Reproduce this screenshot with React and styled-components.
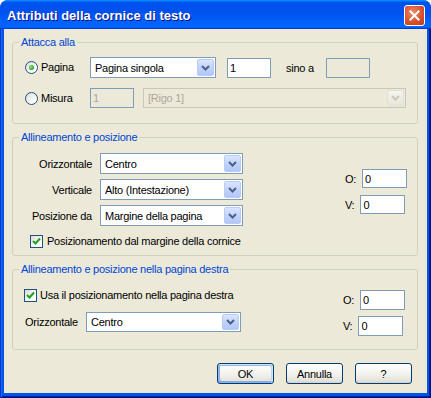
import React from 'react';
import styled, { createGlobalStyle } from 'styled-components';

const GlobalStyle = createGlobalStyle`
  html, body { margin: 0; padding: 0; background: #fff; }
  body {
    font-family: "Liberation Sans", Arial, sans-serif;
    font-size: 11px;
    letter-spacing: -0.25px;
    color: #000;
  }
`;

const Window = styled.div`
  width: 431px;
  height: 398px;
  display: flex;
  flex-direction: column;
  border-radius: 8px 8px 0 0;
  overflow: hidden;
  background: #0055e5;
`;

const TitleBar = styled.div`
  flex: none;
  height: 29px;
  display: flex;
  align-items: center;
  justify-content: space-between;
  padding: 0 6px 0 7px;
  background: linear-gradient(180deg, #0997ff, #0053ee 8%, #0050ee 40%, #06f 88%, #06f 93%, #005bff 95%, #003dd7 96%, #003dd7);
`;

const Title = styled.div`
  color: #fff;
  font-weight: bold;
  font-size: 13px;
  letter-spacing: 0;
  text-shadow: 1px 1px #0f1089;
  padding-top: 1px;
`;

const CloseButton = styled.div`
  width: 21px;
  height: 21px;
  margin-top: 2px;
  box-sizing: border-box;
  border: 1px solid #fff;
  border-radius: 3px;
  background: radial-gradient(circle at 40% 35%, #f08a6c, #d8532f 55%, #b83a14);
  display: flex;
  align-items: center;
  justify-content: center;
`;

const Frame = styled.div`
  flex: 1;
  display: flex;
  padding: 0 4px 5px 4px;
  box-shadow: inset 1px 0 #0831d9, inset -1px -1px #00138c, inset 2px 0 #166aee, inset -2px -2px #001ea0;
`;

const Body = styled.div`
  flex: 1;
  background: #ece9d8;
  padding: 7px 9px 0 8px;
  display: flex;
  flex-direction: column;
  gap: 7px;
`;

const Group = styled.fieldset`
  margin: 0;
  padding: 0;
  min-width: 0;
  border: 1px solid #d0d0bf;
  border-radius: 3px;
`;

const Legend = styled.legend`
  margin-left: 6px;
  padding: 0 2px;
  color: #0046d5;
  line-height: 13px;
`;

const GroupBody = styled.div`
  padding: ${p => p.$pad};
  display: ${p => (p.$flex ? 'flex' : 'block')};
`;

const Row = styled.div`
  display: flex;
  align-items: center;
  height: ${p => p.$h || 21}px;
  margin-top: ${p => p.$mt || 0}px;
  margin-left: ${p => p.$ml || 0}px;
`;

const Option = styled.label`
  display: flex;
  align-items: center;
  gap: 3px;
  width: ${p => (p.$w ? `${p.$w}px` : 'auto')};
  line-height: 13px;
`;

const RadioDot = styled.span`
  width: 13px;
  height: 13px;
  box-sizing: border-box;
  border: 1px solid #1c5180;
  border-radius: 50%;
  background: linear-gradient(135deg, #dcdcd7, #fff 80%);
  display: flex;
  align-items: center;
  justify-content: center;
  &::after {
    content: '';
    display: ${p => (p.$on ? 'block' : 'none')};
    width: 5px;
    height: 5px;
    border-radius: 50%;
    background: radial-gradient(circle at 40% 40%, #8ee58a, #21a121 70%);
  }
`;

const CheckBox = styled.span`
  width: 13px;
  height: 13px;
  box-sizing: border-box;
  border: 1px solid #1c5180;
  background: linear-gradient(135deg, #dcdcd7, #fff 80%);
  display: flex;
  align-items: center;
  justify-content: center;
`;

const Combo = styled.div`
  width: ${p => p.$w}px;
  height: ${p => p.$h || 21}px;
  box-sizing: border-box;
  margin-left: ${p => p.$ml || 0}px;
  border: 1px solid ${p => (p.$disabled ? '#c9c7ba' : '#7f9db9')};
  background: ${p => (p.$disabled ? '#ece9d8' : '#fff')};
  color: ${p => (p.$disabled ? '#aca899' : '#000')};
  display: flex;
  align-items: center;
  padding: 1px;
`;

const ComboText = styled.span`
  flex: 1;
  padding-left: 3px;
  white-space: nowrap;
`;

const ComboButton = styled.span`
  flex: none;
  width: 17px;
  align-self: stretch;
  box-sizing: border-box;
  border: 1px solid ${p => (p.$disabled ? '#e3e1d6' : '#b9ccf9')};
  border-radius: 2px;
  background: ${p => (p.$disabled
    ? 'linear-gradient(180deg, #f5f4ee, #e8e6dc)'
    : 'linear-gradient(180deg, #dbe5fd, #c1d3fb 50%, #b2c7f5)')};
  display: flex;
  align-items: center;
  justify-content: center;
`;

const TextBox = styled.div`
  width: ${p => p.$w || 44}px;
  height: ${p => p.$h || 20}px;
  box-sizing: border-box;
  margin-left: ${p => p.$ml || 0}px;
  border: 1px solid #7f9db9;
  background: ${p => (p.$disabled ? '#ece9d8' : '#fff')};
  color: ${p => (p.$disabled ? '#aca899' : '#000')};
  padding-left: 2px;
  display: flex;
  align-items: center;
`;

const Caption = styled.span`
  width: ${p => (p.$w ? `${p.$w}px` : 'auto')};
  margin-left: ${p => p.$ml || 0}px;
  margin-right: ${p => p.$mr || 0}px;
  text-align: ${p => p.$align || 'left'};
  white-space: nowrap;
`;

const FieldGrid = styled.div`
  display: grid;
  grid-template-columns: 67px 143px;
  grid-auto-rows: 21px;
  column-gap: 8px;
  row-gap: 5px;
  align-items: center;
`;

const Offsets = styled.div`
  margin-left: auto;
  margin-top: ${p => p.$mt}px;
  display: flex;
  flex-direction: column;
  gap: ${p => p.$gap}px;
`;

const OffsetRow = styled.div`
  display: flex;
  align-items: center;
  gap: 6px;
`;

const ButtonRow = styled.div`
  display: flex;
  justify-content: flex-end;
  gap: 12px;
  margin-top: 6px;
  padding-right: 6px;
`;

const Button = styled.button`
  width: 57px;
  height: 21px;
  padding: 0;
  font: inherit;
  letter-spacing: inherit;
  color: #000;
  border: 1px solid #003c74;
  border-radius: 3px;
  background: linear-gradient(180deg, #fff, #f0f0ea 60%, #e3e1d8 90%, #d6d0c5);
  box-shadow: ${p => (p.$default
    ? 'inset -1px 1px #cee7ff, inset 1px 2px #98b8ea, inset -2px 2px #bcd4f6, inset 1px -1px #89ade4, inset 2px -2px #89ade4'
    : 'none')};
`;

const Chevron = ({ disabled }) => (
  <svg width="9" height="6" viewBox="0 0 9 6">
    <polyline points="1,1 4.5,4.5 8,1" fill="none" stroke={disabled ? '#c9c7ba' : '#4d6185'} strokeWidth="2" />
  </svg>
);

const Select = ({ value, w, h, ml, disabled }) => (
  <Combo $w={w} $h={h} $ml={ml} $disabled={disabled}>
    <ComboText>{value}</ComboText>
    <ComboButton $disabled={disabled}><Chevron disabled={disabled} /></ComboButton>
  </Combo>
);

const Check = ({ label, ml }) => (
  <Row $h={13} $ml={ml}>
    <Option>
      <CheckBox>
        <svg width="9" height="9" viewBox="0 0 9 9">
          <polyline points="1,4 3.5,6.5 8,1.5" fill="none" stroke="#21a121" strokeWidth="2" />
        </svg>
      </CheckBox>
      <span style={{ marginLeft: ml ? 1 : 0 }}>{label}</span>
    </Option>
  </Row>
);

const Offset = ({ label, value, h }) => (
  <OffsetRow>
    <Caption>{label}</Caption>
    <TextBox $w={45} $h={h}>{value}</TextBox>
  </OffsetRow>
);

export default function App() {
  return (
    <>
      <GlobalStyle />
      <Window>
        <TitleBar>
          <Title>Attributi della cornice di testo</Title>
          <CloseButton>
            <svg width="11" height="11" viewBox="0 0 11 11">
              <path d="M1.5 1.5 L9.5 9.5 M9.5 1.5 L1.5 9.5" stroke="#fff" strokeWidth="2" strokeLinecap="square" />
            </svg>
          </CloseButton>
        </TitleBar>
        <Frame>
          <Body>
            <Group>
              <Legend>Attacca alla</Legend>
              <GroupBody $pad="8px 10px 15px 12px">
                <Row>
                  <Option $w={65}><RadioDot $on />Pagina</Option>
                  <Select value="Pagina singola" w={126} />
                  <TextBox $ml={11}>1</TextBox>
                  <Caption $ml={15} $w={40}>sino a</Caption>
                  <TextBox $disabled />
                </Row>
                <Row $mt={10} $h={20}>
                  <Option $w={65}><RadioDot />Misura</Option>
                  <TextBox $disabled>1</TextBox>
                  <Select value="[Rigo 1]" w={263} h={20} ml={9} disabled />
                </Row>
              </GroupBody>
            </Group>

            <Group>
              <Legend>Allineamento e posizione</Legend>
              <GroupBody $flex $pad="9px 10px 7px 12px">
                <div>
                  <FieldGrid>
                    <Caption $align="right">Orizzontale</Caption>
                    <Select value="Centro" w={143} />
                    <Caption $align="right">Verticale</Caption>
                    <Select value="Alto (Intestazione)" w={143} />
                    <Caption $align="right">Posizione da</Caption>
                    <Select value="Margine della pagina" w={143} />
                  </FieldGrid>
                  <div style={{ marginTop: 9 }}>
                    <Check label="Posizionamento dal margine della cornice" ml={5} />
                  </div>
                </div>
                <Offsets $mt={16} $gap={7}>
                  <Offset label="O:" value="0" h={19} />
                  <Offset label="V:" value="0" h={19} />
                </Offsets>
              </GroupBody>
            </Group>

            <Group>
              <Legend>Allineamento e posizione nella pagina destra</Legend>
              <GroupBody $flex $pad="13px 12px 13px 11px">
                <div>
                  <Check label="Usa il posizionamento nella pagina destra" />
                  <Row $mt={10} $h={20}>
                    <Caption $w={52} $mr={9} $ml={1}>Orizzontale</Caption>
                    <Select value="Centro" w={155} h={20} />
                  </Row>
                </div>
                <Offsets $mt={1} $gap={6}>
                  <Offset label="O:" value="0" h={20} />
                  <Offset label="V:" value="0" h={20} />
                </Offsets>
              </GroupBody>
            </Group>

            <ButtonRow>
              <Button $default>OK</Button>
              <Button>Annulla</Button>
              <Button>?</Button>
            </ButtonRow>
          </Body>
        </Frame>
      </Window>
    </>
  );
}
